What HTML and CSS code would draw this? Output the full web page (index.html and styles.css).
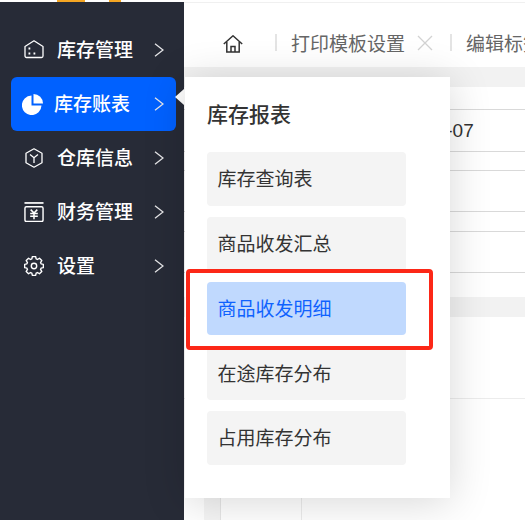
FILE: index.html
```html
<!DOCTYPE html>
<html lang="zh">
<head>
<meta charset="utf-8">
<title>库存报表</title>
<link rel="stylesheet" href="styles.css">
</head>
<body>
<div class="strip"><i class="dash d1"></i><i class="dash d2"></i></div>
<div class="app">
  <nav class="side">
    <a class="nav">
      <svg class="ico" viewBox="0 0 20 20" fill="none" stroke="#fff" stroke-width="1.300"><path d="M1 6.500 10 .8l9 5.700V16a1.500 1.500 0 0 1-1.500 1.500h-15A1.500 1.500 0 0 1 1 16z" stroke-linejoin="round"/><path d="M4.500 8.500h1.800M4.500 13.500h1.800M9.500 13.500h1.800" stroke-width="1.800"/></svg>
      <span class="lbl">库存管理</span><svg class="chev" viewBox="0 0 10 14" fill="none" stroke="#e6e6e8" stroke-width="1.300"><path d="M1 .7 9 7l-8 6.300"/></svg>
    </a>
    <a class="nav on">
      <svg class="ico big" viewBox="0 0 21 21" fill="#fff"><path d="M9.500 1.500v10h10A9.800 9.800 0 1 1 9.500 1.500z"/><path d="M11.500 0A9.500 9.500 0 0 1 21 9.500h-9.500z"/></svg>
      <span class="lbl">库存账表</span><svg class="chev" viewBox="0 0 10 14" fill="none" stroke="#e6e6e8" stroke-width="1.300"><path d="M1 .7 9 7l-8 6.300"/></svg>
    </a>
    <a class="nav">
      <svg class="ico" viewBox="0 0 20 20" fill="none" stroke="#fff" stroke-width="1.300"><path d="M10 .8 18 5.300v9.400l-8 4.500-8-4.500V5.300z" stroke-linejoin="round"/><path d="M6 6.500l4 3.200 4-3.200M10 9.700V15"/></svg>
      <span class="lbl">仓库信息</span><svg class="chev" viewBox="0 0 10 14" fill="none" stroke="#e6e6e8" stroke-width="1.300"><path d="M1 .7 9 7l-8 6.300"/></svg>
    </a>
    <a class="nav">
      <svg class="ico" viewBox="0 0 21 21" fill="none" stroke="#fff" stroke-width="1.500"><path d="M.5 1h20" stroke-width="1.800"/><rect x="1" y="5" width="19" height="15.500" rx="1.500"/><path d="M7 8 10.500 11.500 14 8M6.500 12h8M6.500 15h8M10.500 11.500V18" stroke-width="1.600"/></svg>
      <span class="lbl">财务管理</span><svg class="chev" viewBox="0 0 10 14" fill="none" stroke="#e6e6e8" stroke-width="1.300"><path d="M1 .7 9 7l-8 6.300"/></svg>
    </a>
    <a class="nav">
      <svg class="ico" viewBox="0 0 20 20" fill="none" stroke="#fff" stroke-width="1.400" stroke-linejoin="round"><path d="M7.840 2.920 8.350.640h3.300l.510 2.280 1.310.550 1.980-1.250 2.330 2.330-1.250 1.980.550 1.310 2.280.510v3.300l-2.280.510-.550 1.310 1.250 1.980-2.330 2.330-1.980-1.250-1.310.550-.510 2.280h-3.300l-.510-2.280-1.310-.550-1.980 1.250-2.330-2.330 1.250-1.980-.550-1.310-2.280-.510v-3.300l2.280-.510.550-1.310L2.220 4.550l2.330-2.330 1.980 1.250z"/><circle cx="10" cy="10" r="2.700"/></svg>
      <span class="lbl">设置</span><svg class="chev" viewBox="0 0 10 14" fill="none" stroke="#e6e6e8" stroke-width="1.300"><path d="M1 .7 9 7l-8 6.300"/></svg>
    </a>
  </nav>
  <main class="main">
    <div class="tabs">
      <svg class="home" viewBox="0 0 20 20" fill="none" stroke="#333" stroke-width="1.500"><path d="M.8 10 10 1.800l9.200 8.200" stroke-linejoin="round"/><path d="M3.800 8v10h12.400V8M8 18v-5.500h4V18"/></svg>
      <span class="tab first">打印模板设置<svg class="x" viewBox="0 0 16 16" fill="none" stroke="#d2d2d2" stroke-width="1.300"><path d="M1 1l14 14M15 1 1 15"/></svg></span>
      <span class="tab">编辑标签</span>
    </div>
    <div class="content">
      <div class="band"></div>
      <div class="row r23"></div>
      <div class="row r42"><span class="cell">2023-07</span></div>
      <div class="row r19"></div>
      <div class="row r41"></div>
      <div class="row r20"></div>
      <div class="row r41"></div>
      <div class="band b2"></div>
      <div class="row r82"></div>
      <div class="cols"><i class="gutter"></i><i class="col c2"></i></div>
    </div>
  </main>
</div>
<i class="arrow"></i>
<section class="pop">
  <h2 class="title">库存报表</h2>
  <a class="item">库存查询表</a>
  <a class="item">商品收发汇总</a>
  <a class="item cur">商品收发明细</a>
  <a class="item">在途库存分布</a>
  <a class="item">占用库存分布</a>
</section>
<div class="mark"></div>
</body>
</html>
```
FILE: styles.css
```css
* { box-sizing: border-box; }
html, body { margin: 0; height: 100%; overflow: hidden; }
body { background: #fff; font-family: "Noto Sans CJK SC", "Liberation Sans", sans-serif; color: #333; position: relative; }
.strip { height: 2px; display: flex; background: #fff; }
.dash { display: block; height: 2px; background: #f5a623; }
.d1 { width: 28px; margin-left: 57px; }
.d2 { width: 12px; margin-left: 24px; }
.app { display: flex; height: 518px; }
.side { width: 184px; flex: none; background: #272b37; padding: 21px 8px 0 11px; display: flex; flex-direction: column; }
.nav { height: 54px; display: flex; align-items: center; color: #fff; font-size: 19px; font-weight: 500; padding-left: 13px; border-radius: 6px; }
.nav.on { background: #0061ff; padding-left: 11px; }
.ico { width: 20px; height: 20px; flex: none; margin-right: 13px; }
.ico.big { width: 21px; height: 21px; margin-right: 11px; }
.lbl { line-height: 24px; flex: 1; padding-bottom: 2px; }
.chev { width: 10px; height: 14px; flex: none; margin-right: 12px; }
.main { flex: 1; min-width: 0; overflow: hidden; display: flex; flex-direction: column; }
.tabs { height: 65px; flex: none; display: flex; align-items: center; padding: 15px 0 0 39px; white-space: nowrap; font-size: 19px; color: #666; border-top: 1px solid #f0f0f0; }
.home { width: 20px; height: 20px; flex: none; margin: 2px 32px 0 0; }
.tab { display: flex; align-items: center; padding-left: 16px; flex: none; position: relative; }
.tab::before { content: ""; position: absolute; left: 0; top: 5px; width: 2px; height: 17px; background: #e4e4e4; }
.first { width: 175px; }
.x { width: 16px; height: 16px; flex: none; margin-left: 12px; }
.content { flex: 1; position: relative; background: #fff; }
.band { height: 20px; background: #f2f2f2; }
.row { border-bottom: 1px solid #d9d9d9; display: flex; align-items: center; font-size: 19px; color: #333; padding-left: 220px; font-family: "Liberation Sans", sans-serif; }
.r23 { height: 23px; }
.r42 { height: 42px; }
.r19 { height: 19px; }
.r41 { height: 41px; }
.r20 { height: 20px; }
.band.b2 { margin-top: 24px; }
.r82 { height: 82px; border-bottom-color: #ececec; }
.cols { height: 122px; position: relative; }
.gutter { position: absolute; left: 20px; top: 0; bottom: 0; width: 17px; background: #f5f5f5; border-right: 1px solid #e6e6e6; }
.col { position: absolute; top: 0; bottom: 0; width: 1px; background: #ececec; }
.c2 { left: 117px; }
.arrow { position: absolute; left: 175px; top: 89px; width: 0; height: 0; border: 8px solid transparent; border-left: 0; border-right: 9px solid #fff; }
.pop { position: absolute; left: 185px; top: 77px; width: 265px; height: 421px; background: #fff; box-shadow: 0 4px 40px rgba(0,0,0,.16); padding: 21px 44px 0 22px; }
.title { margin: 0 0 23px; font-size: 21px; line-height: 31px; font-weight: 500; color: #333; }
.item { display: flex; align-items: center; height: 53.750px; background: #f4f4f4; border-radius: 4px; padding: 0 0 2px 10.500px; font-size: 19px; color: #333; margin-bottom: 11px; }
.item.cur { background: #c0d9fe; color: #0f62fe; }
.mark { position: absolute; left: 186px; top: 269px; width: 247px; height: 81px; border: 4px solid #fc2717; border-radius: 4px; }
```
